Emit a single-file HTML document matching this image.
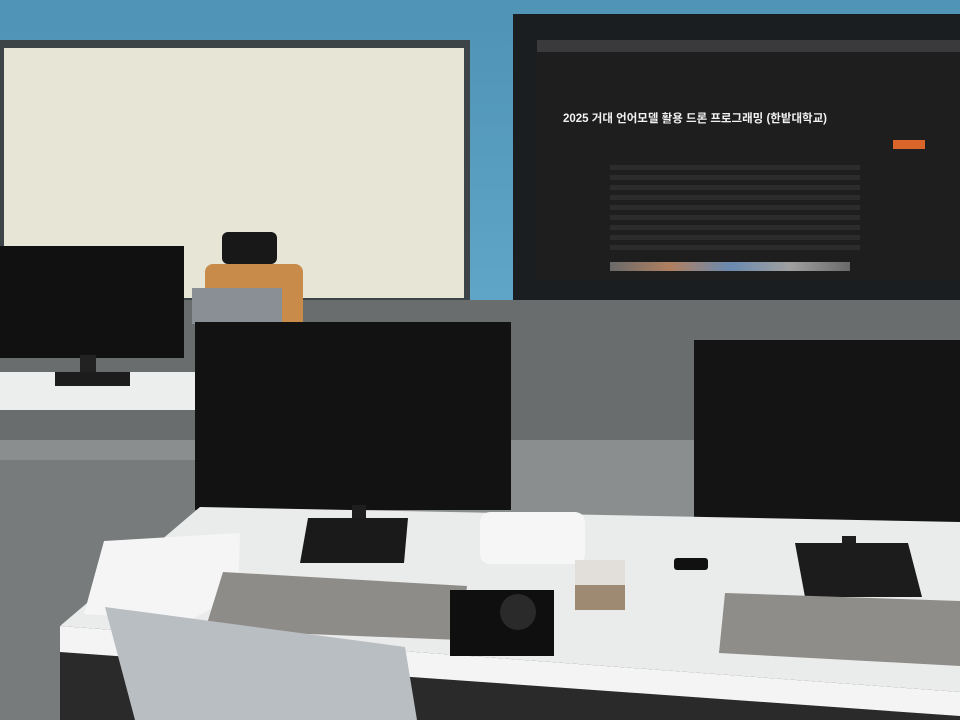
<!DOCTYPE html>
<html><head><meta charset="utf-8"><style>
body{margin:0;width:960px;height:720px;overflow:hidden;position:relative;background:#8d9090;font-family:"Liberation Sans","Noto Sans CJK KR",sans-serif}
div,svg{position:absolute;box-sizing:border-box}
</style></head><body>
<div style="left:0;top:0;width:960px;height:310px;background:linear-gradient(180deg,#4f93b6,#5fa6c8)"></div>
<div style="left:0;top:40px;width:470px;height:262px;background:#3d4448"></div>
<div style="left:4px;top:48px;width:460px;height:250px;background:#e6e5d6"></div>
<div style="left:513px;top:14px;width:447px;height:294px;background:#1b1e21"></div>
<div style="left:537px;top:40px;width:423px;height:240px;background:#1e1e1e"></div>
<div style="left:537px;top:40px;width:423px;height:12px;background:#3a3a3c"></div>
<div style="left:563px;top:110px;color:#f2f2f2;font-size:11.5px;font-weight:bold;white-space:nowrap">2025 거대 언어모델 활용 드론 프로그래밍 (한밭대학교)</div>
<div style="left:893px;top:140px;width:32px;height:9px;background:#d9652b"></div>
<div style="left:610px;top:262px;width:240px;height:9px;background:linear-gradient(90deg,#6a6a6a,#b08060,#6a8ab0,#a0a0a0,#6a6a6a)"></div>
<div style="left:610px;top:165px;width:250px;height:90px;background:repeating-linear-gradient(180deg,#2c2c2c 0 5px,#1e1e1e 5px 10px)"></div>
<div style="left:0;top:300px;width:960px;height:155px;background:#6a6d6e"></div>
<div style="left:0;top:440px;width:960px;height:280px;background:#8a8e8e"></div>
<div style="left:0;top:460px;width:200px;height:260px;background:#777b7b"></div>
<div style="left:0;top:372px;width:197px;height:38px;background:#eceeee"></div>
<div style="left:0;top:246px;width:184px;height:112px;background:#111"></div>
<div style="left:80px;top:355px;width:16px;height:22px;background:#222"></div>
<div style="left:55px;top:372px;width:75px;height:14px;background:#1c1c1c"></div>
<div style="left:222px;top:232px;width:55px;height:32px;background:#181818;border-radius:6px"></div>
<div style="left:205px;top:264px;width:98px;height:60px;background:#c88b4a;border-radius:8px 8px 0 0"></div>
<div style="left:192px;top:288px;width:90px;height:36px;background:#8a8f96"></div>
<div style="left:195px;top:322px;width:316px;height:188px;background:#121212"></div>
<div style="left:694px;top:340px;width:266px;height:202px;background:#141414"></div>
<svg width="960" height="720" style="left:0;top:0">
<polygon points="60,625 960,690 960,720 60,720" fill="#2a2a2a"/>
<polygon points="200,507 960,522 960,692 60,626" fill="#eaebeb"/>
<polygon points="60,626 960,692 960,716 60,652" fill="#f4f4f4"/>
<rect x="352" y="505" width="14" height="16" fill="#1e1e1e"/>
<polygon points="308,518 408,518 404,563 300,563" fill="#1a1a1a"/>
<rect x="842" y="536" width="14" height="12" fill="#1e1e1e"/>
<polygon points="795,543 908,543 922,597 805,597" fill="#1c1c1c"/>
<polygon points="104,541 240,533 238,595 190,620 84,614" fill="#f5f5f5"/>
<rect x="480" y="512" width="105" height="52" rx="10" fill="#f6f6f6"/>
<rect x="575" y="560" width="50" height="50" fill="#e2dfda"/>
<rect x="575" y="585" width="50" height="25" fill="#9e8a72"/>
<rect x="674" y="558" width="34" height="12" rx="3" fill="#111"/>
<polygon points="223,572 467,586 460,640 205,630" fill="#8e8c88"/>
<polygon points="725,593 960,601 960,666 719,653" fill="#8f8d89"/>
<rect x="450" y="590" width="104" height="66" fill="#0f0f0f"/>
<ellipse cx="518" cy="612" rx="18" ry="18" fill="#2a2a2a"/>
<polygon points="105,607 405,647 417,720 135,720" fill="#b9bec3"/>
</svg>
</body></html>
